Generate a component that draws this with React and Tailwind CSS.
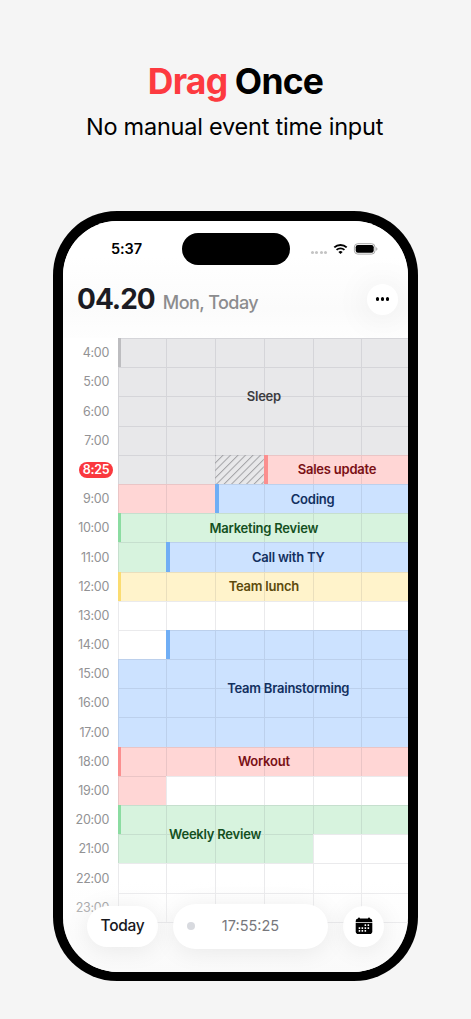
import React from 'react';
import clsx from 'clsx';

const HOURS = [
  '4:00', '5:00', '6:00', '7:00', '8:25', '9:00', '10:00', '11:00', '12:00', '13:00',
  '14:00', '15:00', '16:00', '17:00', '18:00', '19:00', '20:00', '21:00', '22:00', '23:00',
];

// every hour is split into six ten minute slots
const SLOTS = [0, 1, 2, 3, 4, 5];
const SLOT_WIDTH = 48.75;
const ROW_HEIGHT = 29.2;

const TONES = {
  gray: { cell: 'bg-[#e8e8ea]', bar: 'bg-[#bdbdc0]', text: 'text-[#3c3c40]' },
  red: { cell: 'bg-[#ffd6d5]', bar: 'bg-[#fb8f8f]', text: 'text-[#7a1015]' },
  blue: { cell: 'bg-[#cce2ff]', bar: 'bg-[#70aef5]', text: 'text-[#12305f]' },
  green: { cell: 'bg-[#d7f3de]', bar: 'bg-[#8bdca1]', text: 'text-[#14501f]' },
  yellow: { cell: 'bg-[#fff3cb]', bar: 'bg-[#fbdc71]', text: 'text-[#5c4a0c]' },
};

// start / end are slot indexes, label is [firstRow, lastRow, firstSlot, lastSlot]
const EVENTS = [
  { title: 'Sleep', tone: 'gray', start: 0, end: 27, label: [0, 4, 0, 6] },
  { title: 'Sales update', tone: 'red', start: 27, end: 32, label: [4, 5, 3, 6] },
  { title: 'Coding', tone: 'blue', start: 32, end: 36, label: [5, 6, 2, 6] },
  { title: 'Marketing Review', tone: 'green', start: 36, end: 43, label: [6, 7, 0, 6] },
  { title: 'Call with TY', tone: 'blue', start: 43, end: 48, label: [7, 8, 1, 6] },
  { title: 'Team lunch', tone: 'yellow', start: 48, end: 54, label: [8, 9, 0, 6] },
  { title: 'Team Brainstorming', tone: 'blue', start: 61, end: 84, label: [10, 14, 1, 6] },
  { title: 'Workout', tone: 'red', start: 84, end: 91, label: [14, 15, 0, 6] },
  { title: 'Weekly Review', tone: 'green', start: 96, end: 106, label: [16, 18, 0, 4] },
];

const NOW_ROW = 4;
const NOW_SLOT = 26;

const StatusBar = () => (
  <div className="flex h-[64px] pt-[12px]">
    <div className="w-[118.5px] pl-[48px] pt-[6px] text-[14.5px] leading-5 font-semibold tracking-[-0.1px] text-black">
      5:37
    </div>
    <div className="h-8 w-[108px] rounded-full bg-black" />
    <div className="flex h-8 items-center pl-[21px]">
      <div className="flex gap-[1.5px] pt-[8px]">
        {[0, 1, 2, 3].map((dot) => (
          <span key={dot} className="size-[3px] rounded-full bg-[#c4c4c4]" />
        ))}
      </div>
      <svg className="ml-[6px]" width="15" height="12" viewBox="0 0 16 12" fill="none">
        <path d="M1.4 4.3a9.6 9.6 0 0 1 13.2 0" stroke="#000" strokeWidth="2.1" />
        <path d="M3.8 7a6.1 6.1 0 0 1 8.4 0" stroke="#000" strokeWidth="1.9" />
        <path d="M8 11.4 5.7 9.1a3.4 3.4 0 0 1 4.6 0z" fill="#000" />
      </svg>
      <svg className="ml-[5px]" width="25" height="12" viewBox="0 0 25 12" fill="none">
        <rect x="1.4" y=".7" width="20.6" height="10.4" rx="3.4" stroke="#a8a8a8" />
        <rect x="2.7" y="2" width="18" height="7.8" rx="2.2" fill="#000" />
        <path d="M23.2 4.2v3.4c.9-.3 1.2-1 1.2-1.7s-.3-1.4-1.2-1.7z" fill="#a8a8a8" />
      </svg>
    </div>
  </div>
);

const DayHeader = () => (
  <div className="flex h-[53.5px] justify-between pl-[14px] pr-[10px]">
    <div className="flex h-[30px] items-baseline">
      <h2 className="text-[28px] leading-[29px] font-bold tracking-[-1px] text-[#1b1b22]">04.20</h2>
      <span className="ml-2 text-[18px] leading-[22px] font-medium tracking-[-0.55px] text-[#8c8c8e]">
        Mon, Today
      </span>
    </div>
    <button
      type="button"
      aria-label="More"
      className="-mt-px flex size-[31px] items-center justify-center gap-[2px] rounded-full bg-white shadow-[0_2px_36px_rgba(0,0,0,0.09)]"
    >
      <span className="size-[3.3px] rounded-full bg-black" />
      <span className="size-[3.3px] rounded-full bg-black" />
      <span className="size-[3.3px] rounded-full bg-black" />
    </button>
  </div>
);

const NowHatch = () => (
  <svg className="block size-full">
    <defs>
      <pattern id="hatch" width="5.3" height="5.3" patternUnits="userSpaceOnUse" patternTransform="rotate(45)">
        <path d="M.5 0v5.3" stroke="#a2a2a5" strokeWidth="1" />
      </pattern>
    </defs>
    <rect width="100%" height="100%" fill="url(#hatch)" />
  </svg>
);

const Slot = ({ index }) => {
  const event = EVENTS.find((e) => index >= e.start && index < e.end);
  const tone = event && TONES[event.tone];

  return (
    <div
      className={clsx(
        'flex w-[48.75px] shrink-0 shadow-[inset_1px_1px_0_rgba(60,60,80,0.11)]',
        tone && tone.cell,
      )}
    >
      {event && event.start === index && <span className={clsx('w-[3.75px]', tone.bar)} />}
      {index === NOW_SLOT && <NowHatch />}
    </div>
  );
};

const EventLabel = ({ event }) => {
  const [top, bottom, left, right] = event.label;

  return (
    <div
      className={clsx(
        'absolute flex items-center justify-center pt-[1.5px] text-[13px] font-semibold tracking-[-0.23px] whitespace-nowrap',
        TONES[event.tone].text,
      )}
      style={{
        top: top * ROW_HEIGHT,
        height: (bottom - top) * ROW_HEIGHT,
        left: left * SLOT_WIDTH,
        width: (right - left) * SLOT_WIDTH,
      }}
    >
      {event.title}
    </div>
  );
};

const Timetable = () => (
  <div className="flex">
    <div className="w-[54.6px] shrink-0">
      {HOURS.map((hour, row) => (
        <div key={hour} className="flex h-[29.2px] items-center justify-end pt-[2px]">
          {row === NOW_ROW ? (
            <span className="mr-[4.6px] flex h-4 w-[34px] items-center justify-center rounded-full bg-[#fa383e] text-[12.5px] font-semibold tracking-[-0.3px] text-white">
              {hour}
            </span>
          ) : (
            <span className="mr-[8.6px] text-[12.5px] tracking-[-0.3px] text-[#929294]">{hour}</span>
          )}
        </div>
      ))}
    </div>
    <div className="relative w-[292.5px] shrink-0 border-b border-[#e0e0e3]">
      {HOURS.map((hour, row) => (
        <div key={hour} className="flex h-[29.2px]">
          {SLOTS.map((slot) => (
            <Slot key={slot} index={row * 6 + slot} />
          ))}
        </div>
      ))}
      {EVENTS.map((event) => (
        <EventLabel key={event.title} event={event} />
      ))}
    </div>
  </div>
);

const CalendarIcon = () => (
  <svg width="18" height="18" viewBox="0 0 18 18">
    <path d="M3 1.5q0-1 1-1t1 1h8q0-1 1-1t1 1q2.3.3 2.3 2.5v.9H.7V4q0-2.2 2.3-2.5z" fill="#000" />
    <path d="M.7 5.7h16.6v8.5q0 2.8-2.8 2.8h-11Q.7 17 .7 14.2z" fill="#000" />
    <g fill="#fff">
      {[[9.5, 7.3], [12.5, 7.3], [3.6, 10.2], [6.5, 10.2], [9.5, 10.2], [12.5, 10.2], [3.6, 13], [6.5, 13], [9.5, 13]].map(
        ([x, y]) => (
          <rect key={`${x}-${y}`} x={x} y={y} width="1.7" height="1.7" rx=".4" />
        ),
      )}
    </g>
  </svg>
);

const BottomBar = () => (
  <div className="absolute inset-x-0 bottom-0 flex h-[90px] items-start bg-linear-to-b from-transparent to-[#fafafa] pt-[22px] pl-6">
    <button
      type="button"
      className="mt-[2px] h-[41px] w-[71px] rounded-full bg-white text-[15.5px] font-medium tracking-[-0.3px] text-[#18181d] shadow-[0_3px_24px_rgba(0,0,0,0.08)]"
    >
      Today
    </button>
    <div className="relative ml-[15px] flex h-[45px] w-[155px] items-center justify-center rounded-full bg-white text-[14.5px] text-[#77777c] shadow-[0_3px_24px_rgba(0,0,0,0.08)]">
      <span className="absolute left-[14px] size-2 rounded-full bg-[#d8dadf]" />
      17:55:25
    </div>
    <button
      type="button"
      aria-label="Calendar"
      className="mt-[2px] ml-[15px] flex size-[41px] items-center justify-center rounded-full bg-white shadow-[0_3px_24px_rgba(0,0,0,0.08)]"
    >
      <CalendarIcon />
    </button>
  </div>
);

const App = () => {
  return (
    <div className="flex h-[1019px] w-[471px] flex-col items-center overflow-hidden bg-[#f5f5f5] pt-[61px] font-['Inter',sans-serif]">
      <h1 className="text-[35.5px] leading-[42px] font-bold tracking-[-0.8px] text-black">
        <span className="text-[#fd3a40]">Drag</span> Once
      </h1>
      <p className="mt-[8px] pr-[2px] text-[23.5px] leading-8 tracking-[-0.23px] text-black">
        No manual event time input
      </p>

      <div className="mt-[68px] h-[770px] w-[365px] shrink-0 rounded-[64px] bg-black px-[10px] py-[9.5px]">
        <div className="relative h-full overflow-hidden rounded-[54.5px] bg-white">
          <div className="bg-linear-to-b from-white from-30% via-[#fbfbfb] via-75% to-[#fefefe]">
            <StatusBar />
            <DayHeader />
          </div>
          <Timetable />
          <BottomBar />
        </div>
      </div>
    </div>
  );
};

export default App;
